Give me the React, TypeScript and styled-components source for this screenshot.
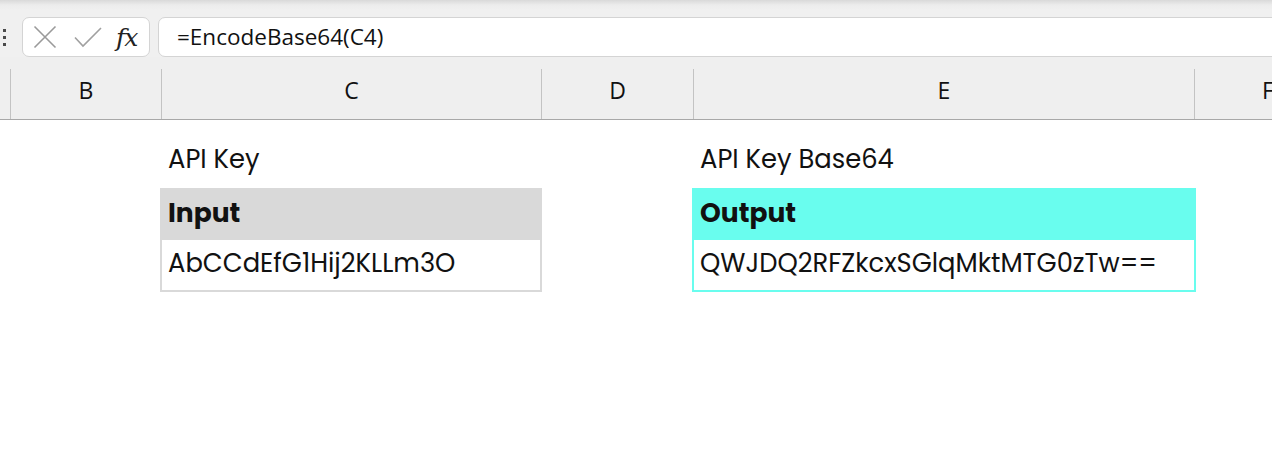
import React from "react";
import styled, { createGlobalStyle } from "styled-components";

const Global = createGlobalStyle`
  html, body { margin: 0; padding: 0; background: #ffffff; }
  body { width: 1272px; height: 449px; overflow: hidden; }
  * { box-sizing: border-box; }
`;

const Page = styled.div`
  width: 1272px;
  height: 449px;
  overflow: hidden;
  background: #fff;
`;

const FormulaArea = styled.div`
  height: 57px;
  background: linear-gradient(to bottom, #d9d9d9 0px, #ececec 5px, #f0f0f0 10px);
  display: flex;
  align-items: flex-start;
  padding-top: 17px;
`;

const Grip = styled.div`
  width: 22px;
  height: 40px;
  display: flex;
  flex-direction: column;
  align-items: flex-start;
  justify-content: center;
  gap: 4px;
  padding-left: 3px;
  padding-top: 1px;
`;

const GripDot = styled.span`
  width: 3px;
  height: 3px;
  background: #4a4a4a;
`;

const FxBox = styled.div`
  width: 128px;
  height: 40px;
  background: #fff;
  border: 1px solid #d4d4d4;
  border-radius: 7px;
  display: flex;
  align-items: center;
  padding-left: 10px;
  gap: 17px;
`;

const Fx = styled.span`
  font-family: "DejaVu Serif", "Liberation Serif", serif;
  font-style: italic;
  font-size: 25px;
  color: #222;
  margin-left: -3px;
  letter-spacing: -1px;
`;

const FormulaInput = styled.div`
  flex: 1;
  height: 40px;
  margin-left: 8px;
  margin-right: -12px;
  background: #fff;
  border: 1px solid #d4d4d4;
  border-radius: 7px;
  display: flex;
  align-items: center;
  padding-left: 18px;
  padding-bottom: 2px;
  font-family: "Open Sans", "Noto Sans", sans-serif;
  font-size: 22.5px;
  color: #111;
`;

const HeaderRow = styled.div`
  height: 63px;
  background: #efefef;
  border-bottom: 1px solid #a8a8a8;
  display: grid;
  grid-template-columns: 10px 151px 380px 152px 501px 1fr;
  padding-top: 12px;
`;

const ColHead = styled.div<{ $first?: boolean }>`
  border-left: ${(p) => (p.$first ? "none" : "1px solid #c3c3c3")};
  display: flex;
  align-items: center;
  justify-content: center;
  padding-bottom: 8px;
  font-family: "Open Sans", "Noto Sans", sans-serif;
  font-size: 23px;
  color: #111;
`;

const EdgeHead = styled(ColHead)`
  justify-content: flex-start;
  padding-left: 67px;
`;

const Body = styled.div`
  display: grid;
  grid-template-columns: 160px 382px 150px 504px 1fr;
  grid-template-rows: 52px auto;
  padding-top: 16px;
`;

const Label = styled.div<{ $col: number }>`
  grid-column: ${(p) => p.$col};
  grid-row: 1;
  display: flex;
  align-items: center;
  padding-left: 8px;
  padding-bottom: 5px;
  font-family: "Poppins", "Open Sans", "Noto Sans", sans-serif;
  font-size: 25.8px;
  color: #111;
`;

const Table = styled.div<{ $col: number; $accent: string }>`
  grid-column: ${(p) => p.$col};
  grid-row: 2;
  border: 2px solid ${(p) => p.$accent};
  display: flex;
  flex-direction: column;
  font-family: "Poppins", "Open Sans", "Noto Sans", sans-serif;
  color: #111;
`;

const TableHead = styled.div<{ $accent: string }>`
  height: 50px;
  background: ${(p) => p.$accent};
  display: flex;
  align-items: center;
  padding-left: 6px;
  padding-bottom: 4px;
  font-size: 26.5px;
  font-weight: 700;
`;

const TableCell = styled.div`
  height: 50px;
  background: #fff;
  display: flex;
  align-items: center;
  padding-left: 6px;
  padding-bottom: 4px;
  font-size: 25.8px;
`;

const CrossIcon = () => (
  <svg width="24" height="24" viewBox="0 0 24 24">
    <path d="M1.5 1.5 L22.5 22.5 M22.5 1.5 L1.5 22.5" stroke="#9a9a9a" strokeWidth="1.6" fill="none" />
  </svg>
);

const CheckIcon = () => (
  <svg width="28" height="24" viewBox="0 0 28 24">
    <path d="M1 12.5 L9 21 L27 3" stroke="#a0a0a0" strokeWidth="1.6" fill="none" />
  </svg>
);

export default function App() {
  return (
    <Page>
      <Global />
      <FormulaArea>
        <Grip>
          <GripDot />
          <GripDot />
          <GripDot />
        </Grip>
        <FxBox>
          <CrossIcon />
          <CheckIcon />
          <Fx>fx</Fx>
        </FxBox>
        <FormulaInput>=EncodeBase64(C4)</FormulaInput>
      </FormulaArea>
      <HeaderRow>
        <ColHead $first />
        <ColHead>B</ColHead>
        <ColHead>C</ColHead>
        <ColHead>D</ColHead>
        <ColHead>E</ColHead>
        <EdgeHead>F</EdgeHead>
      </HeaderRow>
      <Body>
        <Label $col={2}>API Key</Label>
        <Label $col={4}>API Key Base64</Label>
        <Table $col={2} $accent="#d9d9d9">
          <TableHead $accent="#d9d9d9">Input</TableHead>
          <TableCell>AbCCdEfG1Hij2KLLm3O</TableCell>
        </Table>
        <Table $col={4} $accent="#69fdee">
          <TableHead $accent="#69fdee">Output</TableHead>
          <TableCell>QWJDQ2RFZkcxSGlqMktMTG0zTw==</TableCell>
        </Table>
      </Body>
    </Page>
  );
}
